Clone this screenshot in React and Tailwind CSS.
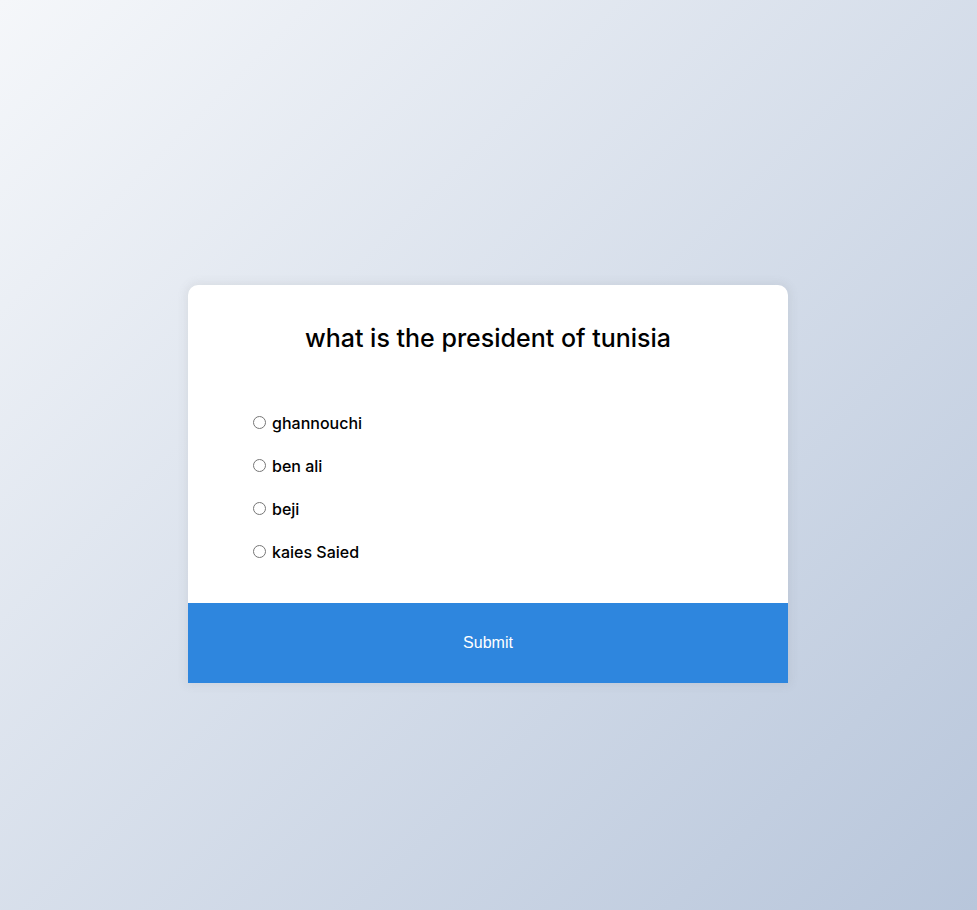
import React, { useState } from 'react';

const options = ['ghannouchi', 'ben ali', 'beji', 'kaies Saied'];

const App = () => {
  const [answer, setAnswer] = useState(null);

  return (
    <div className="min-h-screen flex items-center justify-center pt-[58px] pr-px bg-[linear-gradient(315deg,#b8c6db_0%,#f5f7fa_100%)] font-['Inter',sans-serif]">
      <div className="w-[600px] bg-white rounded-t-[10px] overflow-hidden shadow-[0_0_10px_2px_rgba(100,100,100,0.1)]">
        <div className="px-16 pt-[35px] pb-[30px]">
          <h2 className="text-center text-[25px] leading-[36px] text-black font-medium m-0">
            what is the president of tunisia
          </h2>
          <ul className="list-none p-0 mt-[45px]">
            {options.map((opt) => (
              <li key={opt} className="h-[43px] flex items-center">
                <label className="flex items-center text-[16px] text-black font-medium cursor-pointer">
                  <input
                    type="radio"
                    name="answer"
                    className="w-[13px] h-[13px] m-0 ml-px mr-[6px]"
                    checked={answer === opt}
                    onChange={() => setAnswer(opt)}
                  />
                  {opt}
                </label>
              </li>
            ))}
          </ul>
        </div>
        {/* submit */}
        <button className="block w-full h-[80px] bg-[#2e86de] text-white text-[16px] font-['Liberation_Sans',Arial,sans-serif] border-0">
          Submit
        </button>
      </div>
    </div>
  );
};

export default App;
